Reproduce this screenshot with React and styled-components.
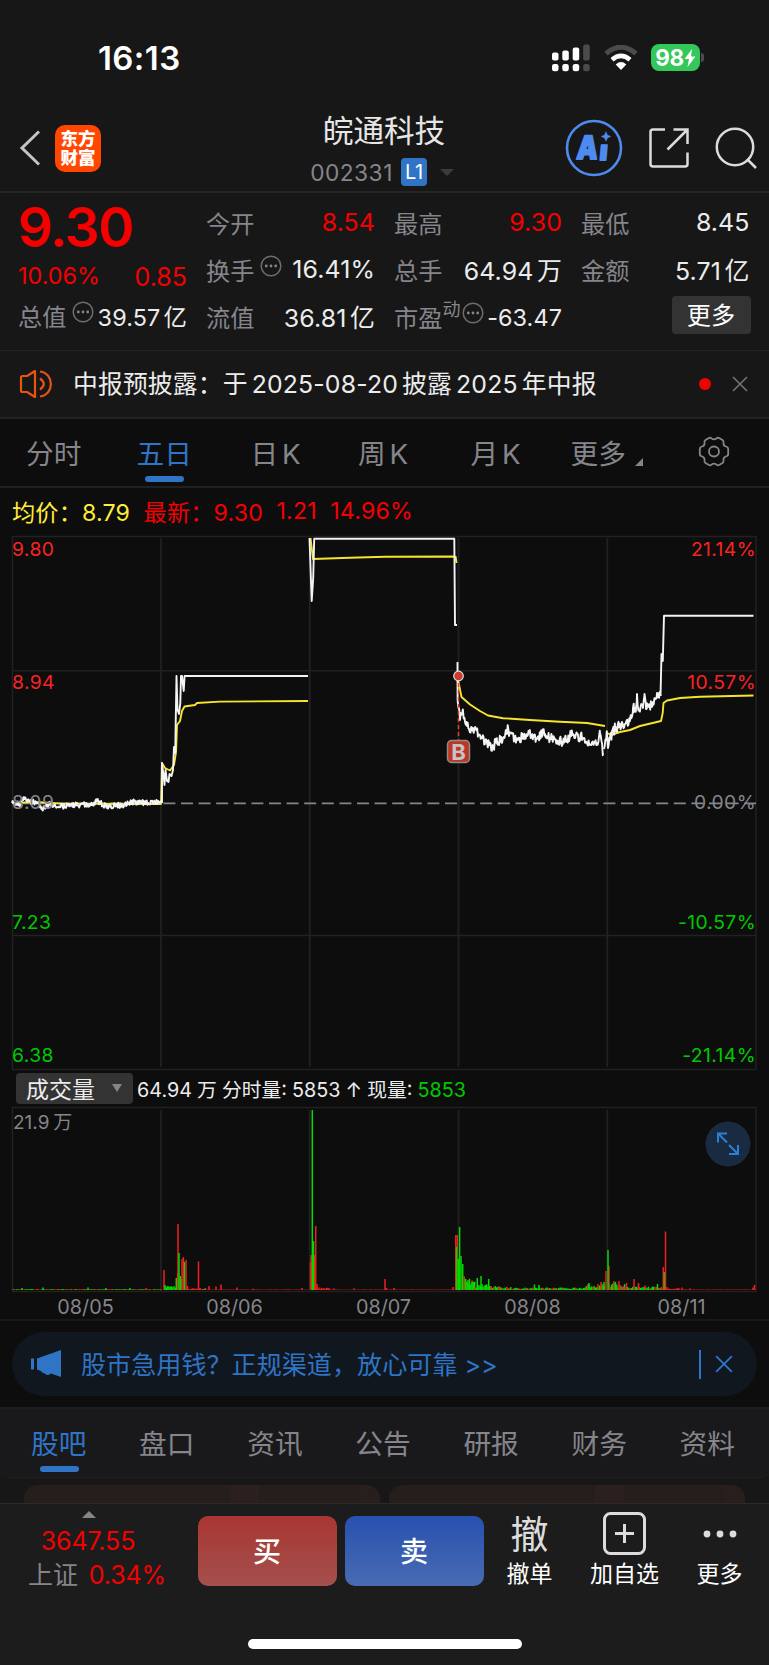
import styled, { createGlobalStyle } from "styled-components";

const GlobalStyle = createGlobalStyle`
  * {
    box-sizing: border-box;
  }

  body {
    margin: 0;
    background: #0d0d0d;
    font-family: Inter, "Noto Sans CJK SC", sans-serif;
    color: #ececec;
  }
`;

const Page = styled.div`
  width: 769px;
  height: 1665px;
  overflow: hidden;
  display: flex;
  flex-direction: column;
  white-space: nowrap;
`;

const StatusBar = styled.div`
  height: 115px;
  flex-shrink: 0;
  padding: 0 65px 0 98px;
  display: flex;
  align-items: center;
  justify-content: space-between;
  background: #171717;
`;

const Time = styled.div`
  font-size: 33px;
  font-weight: 600;
  letter-spacing: 0.4px;
  color: #fff;
`;

const StatusIcons = styled.div`
  display: flex;
  align-items: center;
  gap: 13px;
`;

const Battery = styled.div`
  display: flex;
  align-items: center;
  gap: 1px;
`;

const BatteryBody = styled.div`
  width: 49px;
  height: 27px;
  border-radius: 8px;
  background: #34c759;
  color: #fff;
  font-size: 22.5px;
  font-weight: 700;
  letter-spacing: -0.5px;
  display: flex;
  align-items: center;
  justify-content: center;
`;

const BatteryTip = styled.div`
  width: 3px;
  height: 9px;
  border-radius: 0 4px 4px 0;
  background: #4b4b4b;
`;

const Header = styled.div`
  height: 78px;
  flex-shrink: 0;
  padding: 0 12px 0 19px;
  display: grid;
  grid-template-columns: 36px 226px 1fr auto;
  grid-template-rows: 66px;
  align-items: center;
  background: #171717;
  border-bottom: 2px solid #262626;
`;

const AppLogo = styled.div`
  width: 46px;
  height: 47px;
  border-radius: 10px;
  background: #ff4700;
  color: #fff;
  font-size: 17.5px;
  font-weight: 900;
  line-height: 19px;
  text-align: center;
  padding-top: 4px;
`;

const Title = styled.div`
  width: 206px;
  align-self: start;
  text-align: center;
`;

const StockName = styled.div`
  font-size: 30.6px;
  line-height: 32px;
  color: #e6e6e6;
`;

const StockCode = styled.div`
  display: flex;
  align-items: center;
  justify-content: center;
  gap: 8px;
  height: 34px;
  margin: 8px 0 0 -4px;
  font-size: 22.7px;
  letter-spacing: 0.5px;
  color: #85858b;
`;

const Level = styled.span`
  width: 26px;
  height: 28px;
  border-radius: 4px;
  background: #2f74c5;
  color: #fff;
  font-size: 20px;
  line-height: 28px;
  letter-spacing: -0.5px;
`;

const Caret = styled.span`
  margin-left: 5px;
  border: 7px solid transparent;
  border-top-color: #3b3b3b;
  border-bottom-width: 0;
`;

const HeaderActions = styled.div`
  display: flex;
  align-items: center;
  gap: 25px;
`;

const Quote = styled.div`
  height: 157px;
  flex-shrink: 0;
  padding: 6px 18px 0 18px;
  display: grid;
  grid-template-columns: 169px 169px 168px 168.5px;
  column-gap: 19px;
  background: #171717;
`;

const QuoteColumn = styled.div`
  display: flex;
  flex-direction: column;
`;

const LastPrice = styled.div`
  height: 56px;
  padding-top: 1px;
  line-height: 55px;
  font-size: 55px;
  font-weight: 600;
  letter-spacing: -1.5px;
  color: #f50000;
`;

const Change = styled.div`
  display: flex;
  justify-content: space-between;
  height: 37px;
  line-height: 42px;
  font-size: 23.4px;
  color: #f50000;
`;

const Delta = styled.span`
  padding-top: 1px;
  font-size: 25px;
`;

const QuoteRow = styled.div`
  display: flex;
  align-items: center;
  justify-content: space-between;
  height: 47px;
  padding-bottom: 1px;
  font-size: 24.2px;
`;

const Label = styled.span`
  display: flex;
  color: #85858b;
`;

const Sup = styled.span`
  font-size: 18px;
  line-height: 22px;
  margin: 0 -4px 0 0;
`;

const Value = styled.span`
  font-size: ${({ $small }) => ($small ? "23.4px" : "24.9px")};
  letter-spacing: 0.1px;
  word-spacing: -3.5px;
  padding-top: ${({ $small }) => ($small ? "2px" : "0")};
  color: ${({ $up }) => ($up ? "#f50000" : "#ececec")};
`;

const MoreButton = styled.button`
  width: 79px;
  height: 38px;
  margin: 3px -1px 0 auto;
  padding: 0;
  border: 0;
  border-radius: 4px;
  background: #333;
  color: #fff;
  font: inherit;
  font-size: 24.2px;
  line-height: 37px;
`;

const Notice = styled.div`
  height: 69px;
  flex-shrink: 0;
  padding: 0 21px 0 19px;
  display: flex;
  align-items: center;
  background: #171717;
  border-bottom: 2px solid #222;
  border-top: 1px solid #242424;
`;

const NoticeText = styled.div`
  flex: 1;
  margin-left: 20px;
  padding-bottom: 4px;
  font-size: 24.8px;
  letter-spacing: 0.15px;
  word-spacing: -3px;
`;

const Dot = styled.span`
  width: 12px;
  height: 12px;
  margin-right: 21px;
  border-radius: 50%;
  background: #f50000;
`;

const PeriodTabs = styled.div`
  height: 69px;
  flex-shrink: 0;
  padding: 0 0 2px 26px;
  display: grid;
  grid-template-columns: 110.5px 114px 107.5px 112.5px 100px 127px 1fr;
  justify-items: start;
  border-bottom: 2px solid #202020;
`;

const Tab = styled.div`
  position: relative;
  display: flex;
  align-items: center;
  font-size: 27.7px;
  word-spacing: -4px;
  color: ${({ $active }) => ($active ? "#2f74c5" : "#85858b")};

  &::after {
    content: "";
    display: ${({ $active }) => ($active ? "block" : "none")};
    position: absolute;
    left: calc(50% - 19px);
    bottom: 2px;
    width: 39px;
    height: 6px;
    border-radius: 3px;
    background: #2f74c5;
  }
`;

const Corner = styled.span`
  margin: 21px 0 0 9px;
  border-style: solid;
  border-width: 0 0 8px 8px;
  border-color: transparent transparent #85858b;
`;

const Legend = styled.div`
  height: 42px;
  flex-shrink: 0;
  padding: 4px 12px 0;
  display: flex;
  align-items: center;
  gap: 13.5px;
  font-size: 23.2px;
  letter-spacing: 0.15px;
  color: #f50000;
`;

const Average = styled.span`
  color: #ffee37;
`;

const Chart = styled.svg`
  display: block;
  flex-shrink: 0;
`;

const VolumeBar = styled.div`
  height: 34px;
  flex-shrink: 0;
  padding: 0 0 1px 16px;
  display: flex;
  align-items: center;
  font-size: 19.8px;
`;

const VolumeSelect = styled.div`
  width: 117px;
  height: 31px;
  margin-right: 4px;
  padding: 0 11px 2px 10px;
  display: flex;
  align-items: center;
  justify-content: space-between;
  border-radius: 4px;
  background: #333;
  font-size: 23px;
`;

const VolumeText = styled.span`
  padding-bottom: 1px;
  word-spacing: -0.5px;
`;

const SelectCaret = styled.span`
  border: 5px solid transparent;
  border-top: 8px solid #85858b;
  border-bottom-width: 0;
`;

const Green = styled.span`
  color: #00c800;
`;

const Dates = styled.div`
  height: 28px;
  flex-shrink: 0;
  padding: 1px 13px 0 11px;
  display: grid;
  grid-template-columns: repeat(5, 1fr);
  align-items: center;
  text-align: center;
  font-size: 19.8px;
  color: #85858b;
  border-bottom: 2px solid #181818;
`;

const Promo = styled.div`
  height: 64px;
  flex-shrink: 0;
  margin: 11px 12px;
  padding: 0 24px 0 19px;
  display: flex;
  align-items: center;
  border-radius: 32px;
  background: #10171f;
  color: #2f74c5;
  font-size: 25.1px;
`;

const PromoText = styled.div`
  flex: 1;
  margin-left: 19px;
  padding-bottom: 3px;
`;

const PromoDivider = styled.span`
  width: 2px;
  height: 29px;
  margin-right: 14px;
  background: #2f74c5;
`;

const InfoTabs = styled.div`
  height: 70px;
  flex-shrink: 0;
  padding: 0 34px 3px 31px;
  display: flex;
  justify-content: space-between;
  background: #19191b;
  border-top: 2px solid #1d1d1f;
`;

const Cards = styled.div`
  height: 26px;
  flex-shrink: 0;
  padding: 8px 24px 0;
  display: grid;
  grid-template-columns: 1fr 1fr;
  gap: 9px;
  background: linear-gradient(#202021, #202021) 6px 0 / 757px 1px no-repeat
    #171717;
`;

const Card = styled.div`
  border-radius: 14px 14px 0 0;
  background: linear-gradient(
    90deg,
    #261d1d 0 58%,
    #2b1f1f 58% 66%,
    #261d1d 66% 94%,
    #291e1e 94%
  );
`;

const Footer = styled.div`
  flex: 1;
  display: flex;
  flex-direction: column;
  justify-content: space-between;
  padding-bottom: 16px;
  background: #1c1c1c;
  border-top: 1px solid #2a2a2a;
`;

const Actions = styled.div`
  display: flex;
  padding: 0 20px 0 28px;
`;

const IndexBlock = styled.div`
  width: 138px;
  margin-right: 31.5px;
  display: flex;
  flex-direction: column;
  align-items: center;
  font-size: 25px;
  letter-spacing: -0.1px;
  line-height: 34px;
  color: #f50000;
`;

const IndexCaret = styled.span`
  margin: 7px 17px 0 0;
  border: 7px solid transparent;
  border-top-width: 0;
  border-bottom-color: #85858b;
`;

const IndexValue = styled.div`
  margin: 6px 18px 0 0;
`;

const IndexRow = styled.div`
  display: flex;
  align-self: stretch;
  justify-content: space-between;
`;

const TradeButton = styled.button`
  width: 139px;
  height: 70px;
  margin: 12px 8px 0 0;
  padding: 0 0 2px;
  border: 0;
  border-radius: 10px;
  color: #fff;
  font: inherit;
  font-size: 28px;
  font-weight: 500;
  background: ${({ $side }) =>
    $side === "buy"
      ? "linear-gradient(#a83632, #a4504d)"
      : "linear-gradient(#2651af, #4a6bb3)"};
`;

const Action = styled.div`
  width: ${({ $width }) => $width}px;
  margin-left: ${({ $gap }) => $gap}px;
  padding-top: 8px;
  display: flex;
  flex-direction: column;
  align-items: center;
  font-size: 23px;
  line-height: 30px;
  color: #fff;
`;

const ActionIcon = styled.div`
  height: 43px;
  margin-bottom: 4px;
  display: flex;
  align-items: center;
  font-size: 38px;
  color: #dcdcdc;
`;

const HomeIndicator = styled.div`
  width: 274px;
  height: 10px;
  margin-left: 248px;
  border-radius: 5px;
  background: #fff;
`;

const MoreIcon = styled.svg`
  margin: 3px 0 0 6px;
`;

const More = () => (
  <MoreIcon width="22" height="22" viewBox="0 0 22 22">
    <circle cx="11" cy="11" r="9.8" fill="none" stroke="#6d6d70" strokeWidth="1.5" />
    <g fill="#85858b">
      <circle cx="6.3" cy="11" r="1.4" />
      <circle cx="11" cy="11" r="1.4" />
      <circle cx="15.7" cy="11" r="1.4" />
    </g>
  </MoreIcon>
);

const Close = ({ size, width = 1.5, color }) => (
  <svg width={size} height={size} viewBox="0 0 16 16">
    <path d="M1 1l14 14M15 1L1 15" stroke={color} strokeWidth={width} />
  </svg>
);

const Signal = () => (
  <svg width="40" height="28" viewBox="0 0 40 28">
    {[[1, 8.5, 8], [11.3, 6.5, 10], [21.7, 3.5, 13], [32.2, 0.5, 16]].map(
      ([x, y, h], i) => (
        <g key={x} fill={i < 3 ? "#fff" : "#4b4b4b"}>
          <rect x={x} y={y} width="6.5" height={h} rx="2" />
          <rect x={x} y="20" width="6.5" height="7.2" rx="2.3" />
        </g>
      )
    )}
  </svg>
);

const Wifi = () => (
  <svg width="34" height="26" viewBox="0 0 34 26">
    <path d="M2 8.7Q17-4.2 32 8.7" fill="none" stroke="#4b4b4b" strokeWidth="5" />
    <path d="M8 14.7Q17 7 26 14.7" fill="none" stroke="#fff" strokeWidth="4.6" />
    <path d="M17 25l-5.3-5.6q5.3-4.6 10.6 0z" fill="#fff" />
  </svg>
);

// deterministic 0..1 noise so the ticks stay the same between renders
const noise = (n) => {
  const value = Math.sin(n * 127.1 + 11.7) * 43758.5453;
  return value - Math.floor(value);
};

const toPath = (points) => points.map(([x, y]) => `${x},${y}`).join(" ");

const jitter = (points, amplitude) => {
  const result = [];
  points.forEach(([x, y], index) => {
    const next = points[index + 1];
    result.push([x, y]);
    if (!next) return;
    for (let step = x + 0.7; step < next[0]; step += 0.7) {
      const ratio = (step - x) / (next[0] - x);
      const offset = (noise(step) - 0.5) * 2 * amplitude;
      result.push([step.toFixed(1), (y + (next[1] - y) * ratio + offset).toFixed(1)]);
    }
  });
  return result;
};

const priceLines = [
  jitter(
    [[12, 803], [21, 804], [24, 797], [29, 801], [38, 803], [43, 808], [50, 804], [57, 807], [75, 805], [92, 805], [97, 801], [105, 806], [124, 805], [130, 802], [148, 803], [161, 802]],
    2.8
  ),
  [[162, 803], [162, 763], [163.5, 775], [164.5, 785], [165.5, 770], [167, 781], [168.5, 782], [169.5, 774], [171.5, 776], [173, 770], [174, 747], [175.2, 753], [176.5, 676], [177.5, 710], [179, 714], [180.3, 703], [181, 676], [182, 676], [183.7, 691], [184.6, 676], [308, 676]],
  [[309.5, 538], [311.7, 601], [313.2, 578], [314.2, 538.8], [454.3, 538.8], [455, 625], [457, 625]],
  jitter(
    [[457.5, 662], [457.6, 700], [458.5, 707], [460, 720], [463, 711], [467, 726], [473, 730], [480, 735], [485, 742], [492, 747], [497, 742], [503, 738], [507, 734], [508, 727], [509, 736], [518, 740], [530, 733], [537, 739], [543, 733], [550, 738], [562, 742], [573, 734], [583, 738], [590, 745], [597, 743], [600, 733], [603, 753]],
    5
  ),
  jitter(
    [[604, 749], [607, 734], [608, 748], [610, 738], [615, 728], [625, 724], [630, 720], [633, 708], [636, 708], [637, 694], [638.5, 709], [643, 708], [644.5, 694], [646, 709], [653, 702], [657, 693], [660.5, 696]],
    5
  ),
  [[660.5, 696], [661.5, 654], [662.8, 661], [664, 615.8], [753.5, 615.8]],
];

const averageLines = [
  [[12, 803], [35, 802], [60, 803.5], [100, 803.8], [161, 804], [162, 763], [165, 768], [170, 770.5], [174, 765], [176, 752], [177, 725], [180, 721], [182, 711], [184.5, 706.5], [195, 705], [197, 703], [220, 701.6], [308, 701]],
  [[310.5, 538], [313, 559], [350, 557.8], [385, 556.8], [453.5, 556.5], [455.7, 557], [456.5, 563]],
  [[458, 680], [461.5, 697], [470, 704.5], [480, 711], [488, 715.5], [503, 718.2], [530, 720], [560, 721.8], [587, 723], [605, 726]],
  [[607, 733], [611, 735], [620, 732], [630, 730], [640, 726], [661, 721], [662.7, 713], [663.5, 703], [667, 700.5], [680, 698], [700, 696.7], [753.5, 695.5]],
];

const priceLabels = [
  [556, "9.80", "21.14%", "#f92323"],
  [688.5, "8.94", "10.57%", "#f92323"],
  [808.5, "8.09", "0.00%", "#85858b"],
  [929, "7.23", "-10.57%", "#00c800"],
  [1061.5, "6.38", "-21.14%", "#00c800"],
];

const PriceChart = () => (
  <Chart width="769" height="542" viewBox="0 530 769 542">
    <g stroke="#212122" strokeWidth="1.5" fill="none">
      <rect x="12.5" y="536.5" width="743.5" height="533" />
      <path d="M12 670.7H756M12 935.5H756" />
      <path d="M161 538V1067M309.7 538V1067M458.5 538V1067M607.3 538V1067" strokeWidth="1.8" />
    </g>
    <path d="M12 803.3H756" stroke="#85858b" strokeWidth="1.8" strokeDasharray="12 5.6" strokeDashoffset="7" />
    <g fill="none" strokeWidth="1.9" strokeLinejoin="round">
      {averageLines.map((points, i) => (
        <polyline key={i} points={toPath(points)} stroke="#f5e52f" />
      ))}
      {priceLines.map((points, i) => (
        <polyline key={i} points={toPath(points)} stroke="#f4f4f4" />
      ))}
    </g>
    <g fontSize="19.3" letterSpacing="0.4">
      {priceLabels.map(([y, price, percent, color]) => (
        <g key={price} fill={color}>
          <text x="12" y={y}>{price}</text>
          <text x="756" y={y} textAnchor="end">{percent}</text>
        </g>
      ))}
    </g>
    <path d="M458.5 676V742" stroke="#f23a2a" strokeWidth="1.5" strokeDasharray="4 3" />
    <circle cx="458.5" cy="676" r="4.8" fill="#ce3a2b" stroke="#ddd" strokeWidth="1.2" />
    <rect x="447.5" y="740.5" width="22" height="22" rx="4" fill="#c03424" stroke="#8c8c8c" strokeWidth="1.5" />
    <text x="458.5" y="759.5" textAnchor="middle" fontSize="22" fontWeight="700" fill="#c4c4c4">
      B
    </text>
  </Chart>
);

const RED = "#ee2020";
const GREEN = "#00dc00";

// quiet stretches: start, end, height, share of red
const ranges = [
  [13, 162, 1, 0.5],
  [165, 176, 4, 0.1],
  [186, 206, 2, 0.9],
  [315, 330, 3, 1],
  [463, 475, 13, 0.15],
  [475, 490, 6, 0.15],
  [490, 512, 4, 0.35],
  [512, 585, 2.6, 0.25],
  [585, 605, 6, 0.3],
  [609, 625, 7, 0.4],
  [625, 662, 3.5, 0.35],
  [662, 680, 2, 1],
  [680, 756, 0.5, 1],
  [206, 308, 0.5, 1],
  [330, 455, 0.5, 1],
];

const spikes = [
  [22, 2, GREEN], [43, 2.5, GREEN], [88, 2.5, GREEN], [106, 2, GREEN], [130, 2, GREEN], [146, 2, RED],
  [164, 20, RED], [165, 5, GREEN], [176.3, 12, GREEN], [177.7, 17, RED], [178, 66, RED], [179, 37, GREEN], [180.3, 14, GREEN],
  [181.5, 11, GREEN], [182, 31, RED], [183.4, 33, RED], [184.5, 28, GREEN], [186, 30, RED], [187.5, 4, RED],
  [198.5, 28.5, RED], [209, 4, RED], [216, 3.5, RED], [221, 5.5, RED], [237, 2.5, RED], [253, 1.3, RED],
  [302, 2, RED], [310.5, 28, RED], [311.2, 35, RED], [315.7, 64, RED], [314.5, 35, RED], [312.3, 180, GREEN],
  [313.5, 49, GREEN], [317, 6, RED], [334, 1.5, RED], [354, 1.6, RED], [385, 11, RED], [386.5, 2, RED], [394, 2, RED],
  [453, 3, RED], [455.8, 55, RED], [457.3, 55, RED], [456.5, 43, GREEN], [458.3, 31, GREEN], [459.6, 63, GREEN],
  [461, 34, GREEN], [462.7, 26, GREEN], [464, 14, RED], [465.7, 11, GREEN], [468, 10, GREEN], [472, 8, GREEN],
  [477.3, 12, GREEN], [481, 14, GREEN], [482, 6, GREEN], [488.7, 11, GREEN], [534.5, 5.5, GREEN], [539, 5, GREEN],
  [589, 7, GREEN], [598, 6, RED], [601, 8, RED], [604, 8, GREEN], [606, 19, RED], [609, 24, RED], [608, 40, GREEN],
  [614, 9, RED], [615.5, 8, GREEN], [619, 9, RED], [626.5, 7, RED], [634, 11, RED], [638.5, 7, RED], [645, 4.5, RED],
  [657.5, 6, GREEN], [663.3, 23, RED], [664.3, 18, GREEN], [665.5, 58.5, RED], [667, 3, RED], [682, 2.5, RED],
  [690, 1.5, RED], [753, 2.5, RED], [754.5, 5, RED],
];

const volumeBars = ranges.flatMap(([start, end, height, red]) => {
  const bars = [];
  for (let x = start; x < end; x += 1.3) {
    bars.push([x, height * (0.35 + noise(x) * 0.65), noise(x + 3) < red ? RED : GREEN]);
  }
  return bars;
});

const VolumeChart = () => (
  <Chart width="769" height="187" viewBox="0 1106 769 187">
    <g stroke="#212122" strokeWidth="1.5" fill="none">
      <rect x="12.5" y="1107.5" width="743.5" height="184" />
      <path d="M161 1110V1291M309.7 1110V1291M458.5 1110V1291M607.3 1110V1291" strokeWidth="1.8" />
    </g>
    {[...volumeBars, ...spikes].map(([x, height, color], i) => (
      <rect key={i} x={x - 0.75} y={1290 - height} width="1.5" height={height} fill={color} />
    ))}
    <text x="13" y="1129" fontSize="19" wordSpacing="-1.5" fill="#85858b">
      21.9 万
    </text>
    <circle cx="728" cy="1144" r="22.5" fill="#182b41" />
    <path
      d="M718 1142.5v-9h9M718.5 1134l8.5 8.5M738 1145v9h-9M737.5 1153.5l-8.5-8.5"
      fill="none"
      stroke="#2f7ed6"
      strokeWidth="2"
    />
  </Chart>
);

const AiLogo = () => (
  <svg width="58" height="58" viewBox="0 0 58 58">
    <circle cx="29" cy="29" r="27" fill="none" stroke="#4d8bf0" strokeWidth="2.6" />
    <g fill="#4d8bf0" stroke="#4d8bf0" strokeWidth="1.8" strokeLinejoin="round" fontWeight="900">
      <text transform="translate(11 40) skewX(-5) scale(.83 1)" fontSize="32">A</text>
      <text transform="translate(34 40.5) skewX(-5)" fontSize="27">ı</text>
      <path
        d="M41 12.8l1.4 3.3 3.3 1.4-3.3 1.4-1.4 3.3-1.4-3.3-3.3-1.4 3.3-1.4z"
        strokeWidth="0.5"
      />
    </g>
  </svg>
);

const App = () => {
  return (
    <>
      <GlobalStyle />
      <Page>
        <StatusBar>
          <Time>16:13</Time>
          <StatusIcons>
            <Signal />
            <Wifi />
            <Battery>
              <BatteryBody>
                98
                <svg width="12" height="18" viewBox="0 0 12 18">
                  <path d="M8 0L0.5 10H5L3.5 18 11.5 7.5H7z" fill="#fff" />
                </svg>
              </BatteryBody>
              <BatteryTip />
            </Battery>
          </StatusIcons>
        </StatusBar>

        <Header>
          <svg width="22" height="36" viewBox="0 0 22 36">
            <path d="M20 1.5L3 18l17 16.5" fill="none" stroke="#c4c4c4" strokeWidth="3" />
          </svg>
          <AppLogo>
            东方
            <br />
            财富
          </AppLogo>
          <Title>
            <StockName>皖通科技</StockName>
            <StockCode>
              002331
              <Level>L1</Level>
              <Caret />
            </StockCode>
          </Title>
          <HeaderActions>
            <AiLogo />
            <svg width="42" height="42" viewBox="0 0 42 42">
              <path
                d="M17 2.5H5q-2.5 0-2.5 2.5V37q0 2.5 2.5 2.5H37q2.5 0 2.5-2.5V25.5M25.5 2.5H39.5V17M39.5 2.5L19.5 22.5"
                fill="none"
                stroke="#dcdcdc"
                strokeWidth="2.5"
              />
            </svg>
            <svg width="42" height="42" viewBox="0 0 42 42">
              <circle cx="20" cy="20" r="18.2" fill="none" stroke="#dcdcdc" strokeWidth="2.5" />
              <path d="M32 32l9 9" stroke="#dcdcdc" strokeWidth="2.5" />
            </svg>
          </HeaderActions>
        </Header>

        <Quote>
          <QuoteColumn>
            <LastPrice>9.30</LastPrice>
            <Change>
              <span>10.06%</span>
              <Delta>0.85</Delta>
            </Change>
            <QuoteRow>
              <Label>
                总值
                <More />
              </Label>
              <Value $small>39.57 亿</Value>
            </QuoteRow>
          </QuoteColumn>
          <QuoteColumn>
            <QuoteRow>
              <Label>今开</Label>
              <Value $up>8.54</Value>
            </QuoteRow>
            <QuoteRow>
              <Label>
                换手
                <More />
              </Label>
              <Value>16.41%</Value>
            </QuoteRow>
            <QuoteRow>
              <Label>流值</Label>
              <Value>36.81 亿</Value>
            </QuoteRow>
          </QuoteColumn>
          <QuoteColumn>
            <QuoteRow>
              <Label>最高</Label>
              <Value $up>9.30</Value>
            </QuoteRow>
            <QuoteRow>
              <Label>总手</Label>
              <Value>64.94 万</Value>
            </QuoteRow>
            <QuoteRow>
              <Label>
                市盈
                <Sup>动</Sup>
                <More />
              </Label>
              <Value $small>-63.47</Value>
            </QuoteRow>
          </QuoteColumn>
          <QuoteColumn>
            <QuoteRow>
              <Label>最低</Label>
              <Value>8.45</Value>
            </QuoteRow>
            <QuoteRow>
              <Label>金额</Label>
              <Value>5.71 亿</Value>
            </QuoteRow>
            <MoreButton>更多</MoreButton>
          </QuoteColumn>
        </Quote>

        <Notice>
          <svg width="34" height="28" viewBox="0 0 34 28">
            <path
              d="M2 7.5q0-1.5 1.5-1.5H8L16 1V27L8 22H3.5Q2 22 2 20.5zM21 8.5Q28.5 14 21 19.5M21 1.5C35.5 3 35.5 25 21 26.5"
              fill="none"
              stroke="#e8550f"
              strokeWidth="2.2"
              strokeLinejoin="round"
            />
          </svg>
          <NoticeText>中报预披露：于 2025-08-20 披露 2025 年中报</NoticeText>
          <Dot />
          <Close size={16} color="#77777a" />
        </Notice>

        <PeriodTabs>
          <Tab>分时</Tab>
          <Tab $active>五日</Tab>
          <Tab>日 K</Tab>
          <Tab>周 K</Tab>
          <Tab>月 K</Tab>
          <Tab>
            更多
            <Corner />
          </Tab>
          <Tab>
            <svg width="32" height="31" viewBox="0 0 32 31">
              <path
                d="M10.5 2.2q1.8-1 3 .2q2.5 2 5 0q1.2-1.2 3-.2l3 1.8q1.4 1 1 2.8q-.4 2.7 2.4 3.7q2.3.6 2.3 2.5v5q0 1.9-2.3 2.5q-2.8 1-2.4 3.7q.4 1.8-1 2.8l-3 1.8q-1.8 1-3-.2q-2.5-2-5 0q-1.2 1.2-3 .2l-3-1.8q-1.4-1-1-2.8q.4-2.7-2.4-3.7q-2.3-.6-2.3-2.5v-5q0-1.9 2.3-2.5q2.8-1 2.4-3.7q-.4-1.8 1-2.8z"
                fill="none"
                stroke="#85858b"
                strokeWidth="1.8"
              />
              <circle cx="16" cy="15.5" r="5" fill="none" stroke="#85858b" strokeWidth="1.8" />
            </svg>
          </Tab>
        </PeriodTabs>

        <Legend>
          <Average>均价：8.79</Average>
          <span>最新：9.30</span>
          <span>1.21</span>
          <span>14.96%</span>
        </Legend>
        <PriceChart />
        <VolumeBar>
          <VolumeSelect>
            成交量
            <SelectCaret />
          </VolumeSelect>
          <VolumeText>
            64.94 万 分时量: 5853 ↑ 现量: <Green>5853</Green>
          </VolumeText>
        </VolumeBar>
        <VolumeChart />
        <Dates>
          <span>08/05</span>
          <span>08/06</span>
          <span>08/07</span>
          <span>08/08</span>
          <span>08/11</span>
        </Dates>

        <Promo>
          <svg width="31" height="28" viewBox="0 0 31 28">
            <path d="M0 8.5h3v11H0zM6 8.5L30 0V27L20 23.5q-3.5 3-7-.5-2 .5-3-2L6 19.5z" fill="#2f74c5" />
          </svg>
          <PromoText>股市急用钱？正规渠道，放心可靠 &gt;&gt;</PromoText>
          <PromoDivider />
          <Close size={18} color="#2f74c5" width={1.7} />
        </Promo>

        <InfoTabs>
          <Tab $active>股吧</Tab>
          <Tab>盘口</Tab>
          <Tab>资讯</Tab>
          <Tab>公告</Tab>
          <Tab>研报</Tab>
          <Tab>财务</Tab>
          <Tab>资料</Tab>
        </InfoTabs>
        <Cards>
          <Card />
          <Card />
        </Cards>

        <Footer>
          <Actions>
            <IndexBlock>
              <IndexCaret />
              <IndexValue>3647.55</IndexValue>
              <IndexRow>
                <Label>上证</Label>
                <span>0.34%</span>
              </IndexRow>
            </IndexBlock>
            <TradeButton $side="buy">买</TradeButton>
            <TradeButton $side="sell">卖</TradeButton>
            <Action $width={46} $gap={15}>
              <ActionIcon>撤</ActionIcon>
              撤单
            </Action>
            <Action $width={70} $gap={37}>
              <ActionIcon>
                <svg width="43" height="43" viewBox="0 0 43 43" fill="none" stroke="#dcdcdc" strokeWidth="3">
                  <rect x="1.5" y="1.5" width="40" height="40" rx="6" />
                  <path d="M21.5 12v19M12 21.5h19" />
                </svg>
              </ActionIcon>
              加自选
            </Action>
            <Action $width={46} $gap={37}>
              <ActionIcon>
                <svg width="34" height="8" viewBox="0 0 34 8" fill="#dcdcdc">
                  <circle cx="4" cy="4" r="3.4" />
                  <circle cx="17" cy="4" r="3.4" />
                  <circle cx="30" cy="4" r="3.4" />
                </svg>
              </ActionIcon>
              更多
            </Action>
          </Actions>
          <HomeIndicator />
        </Footer>
      </Page>
    </>
  );
};

export default App;
